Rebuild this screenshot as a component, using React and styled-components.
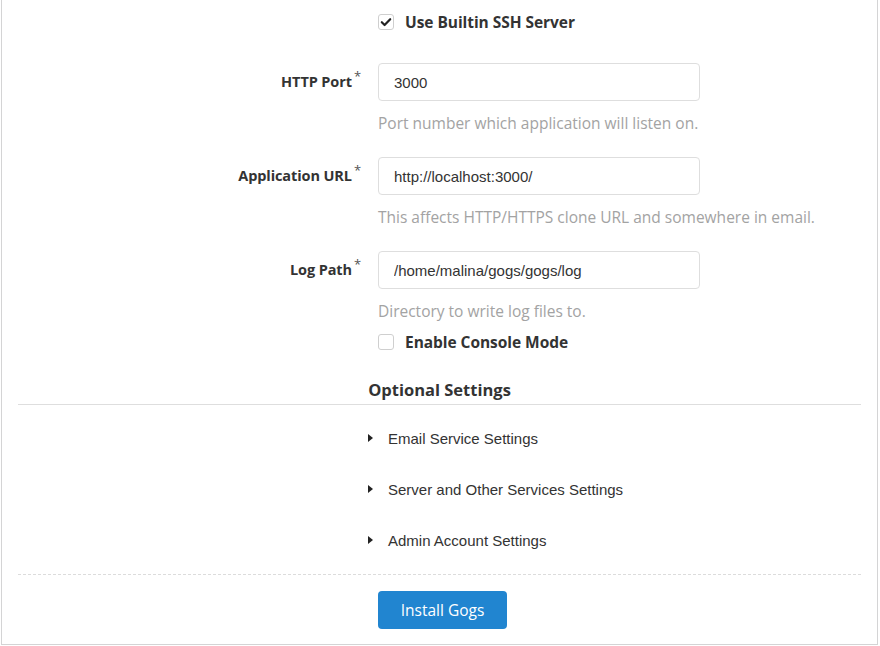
import React from 'react';
import styled, { createGlobalStyle } from 'styled-components';

const GlobalStyle = createGlobalStyle`
  html, body {
    margin: 0;
    padding: 0;
    background: #ffffff;
  }
  body {
    font-family: "Open Sans", "Liberation Sans", sans-serif;
    color: #333333;
  }
`;

const Panel = styled.div`
  width: 877px;
  height: 645px;
  margin: 0 1px;
  border: 1px solid #d4d4d5;
  border-top: none;
  padding: 0 16px;
  box-sizing: border-box;
  display: flex;
  flex-direction: column;
`;

const Row = styled.div`
  display: grid;
  grid-template-columns: 343px 1fr;
  column-gap: 17px;
  margin-top: ${p => p.$top || 0}px;
`;

const Label = styled.label`
  text-align: right;
  font-weight: 700;
  font-size: 14.5px;
  color: #333;
  height: 38px;
  line-height: 38px;
  letter-spacing: -0.1px;
`;

const Star = styled.span`
  position: relative;
  top: -6px;
  margin-left: 2px;
  font-size: 13px;
  font-weight: 400;
  color: #555;
`;

const Field = styled.div`
  grid-column: 2;
  display: flex;
  flex-direction: column;
`;

const Input = styled.input`
  width: 322px;
  height: 38px;
  box-sizing: border-box;
  border: 1px solid #dedede;
  border-radius: 4px;
  padding: 0 15px;
  font-family: "Liberation Sans", Arial, sans-serif;
  font-size: 15px;
  color: #333;
  outline: none;
`;

const Help = styled.div`
  margin-top: 12px;
  font-size: 15.5px;
  line-height: 20px;
  color: #a3a3a3;
`;

const Check = styled.label`
  display: flex;
  align-items: center;
  gap: 11px;
  height: 16px;
  margin-top: 1px;
  font-weight: 700;
  font-size: 15.5px;
  color: #333;
  letter-spacing: -0.05px;
`;

const Box = styled.span`
  width: 16px;
  height: 16px;
  box-sizing: border-box;
  border: 1px solid #cfcfcf;
  border-radius: 3px;
  display: flex;
  align-items: center;
  justify-content: center;
  background: #fff;
`;

const SectionTitle = styled.div`
  margin-top: 30px;
  text-align: center;
  font-weight: 700;
  font-size: 16.5px;
  line-height: 20px;
  padding-bottom: 4px;
  border-bottom: 1px solid #dedede;
  letter-spacing: 0;
`;

const Accordion = styled.div`
  display: flex;
  flex-direction: column;
  padding-left: 350px;
  padding-top: 23px;
  padding-bottom: 24px;
  gap: 31px;
  border-bottom: 1px dashed #dcdcdc;
`;

const Item = styled.div`
  display: flex;
  align-items: center;
  height: 20px;
  font-family: "Liberation Sans", Arial, sans-serif;
  font-size: 15px;
  color: #333;
  cursor: pointer;
`;

const Caret = styled.span`
  width: 0;
  height: 0;
  border-top: 4.5px solid transparent;
  border-bottom: 4.5px solid transparent;
  border-left: 5px solid #222;
  margin-right: 15px;
`;

const ButtonRow = styled.div`
  padding-top: 16px;
  padding-left: 360px;
`;

const Button = styled.button`
  width: 129px;
  height: 38px;
  border: none;
  border-radius: 4px;
  background: #2185d0;
  color: #ffffff;
  font-family: "Open Sans", "Liberation Sans", sans-serif;
  font-size: 15.5px;
  cursor: pointer;
`;

const Tick = () => (
  <svg width="12" height="12" viewBox="0 0 12 12">
    <path d="M1.8 6.2 L4.6 9 L10.2 3.2" fill="none" stroke="#222" strokeWidth="2.2" strokeLinecap="round" strokeLinejoin="round" />
  </svg>
);

const fields = [
  { label: 'HTTP Port', value: '3000', help: 'Port number which application will listen on.' },
  { label: 'Application URL', value: 'http://localhost:3000/', help: 'This affects HTTP/HTTPS clone URL and somewhere in email.' },
  { label: 'Log Path', value: '/home/malina/gogs/gogs/log', help: 'Directory to write log files to.' },
];

const sections = ['Email Service Settings', 'Server and Other Services Settings', 'Admin Account Settings'];

export default function App() {
  return (
    <>
      <GlobalStyle />
      <Panel>
        <Row $top={13}>
          <Field>
            <Check>
              <Box><Tick /></Box>
              Use Builtin SSH Server
            </Check>
          </Field>
        </Row>

        {fields.map((f, i) => (
          <Row key={f.label} $top={i === 0 ? 33 : 24}>
            <Label>{f.label}<Star>*</Star></Label>
            <Field>
              <Input defaultValue={f.value} />
              <Help>{f.help}</Help>
            </Field>
          </Row>
        ))}

        <Row $top={12}>
          <Field>
            <Check>
              <Box />
              Enable Console Mode
            </Check>
          </Field>
        </Row>

        <SectionTitle>Optional Settings</SectionTitle>
        <Accordion>
          {sections.map(s => (
            <Item key={s}><Caret />{s}</Item>
          ))}
        </Accordion>

        <ButtonRow>
          <Button>Install Gogs</Button>
        </ButtonRow>
      </Panel>
    </>
  );
}
